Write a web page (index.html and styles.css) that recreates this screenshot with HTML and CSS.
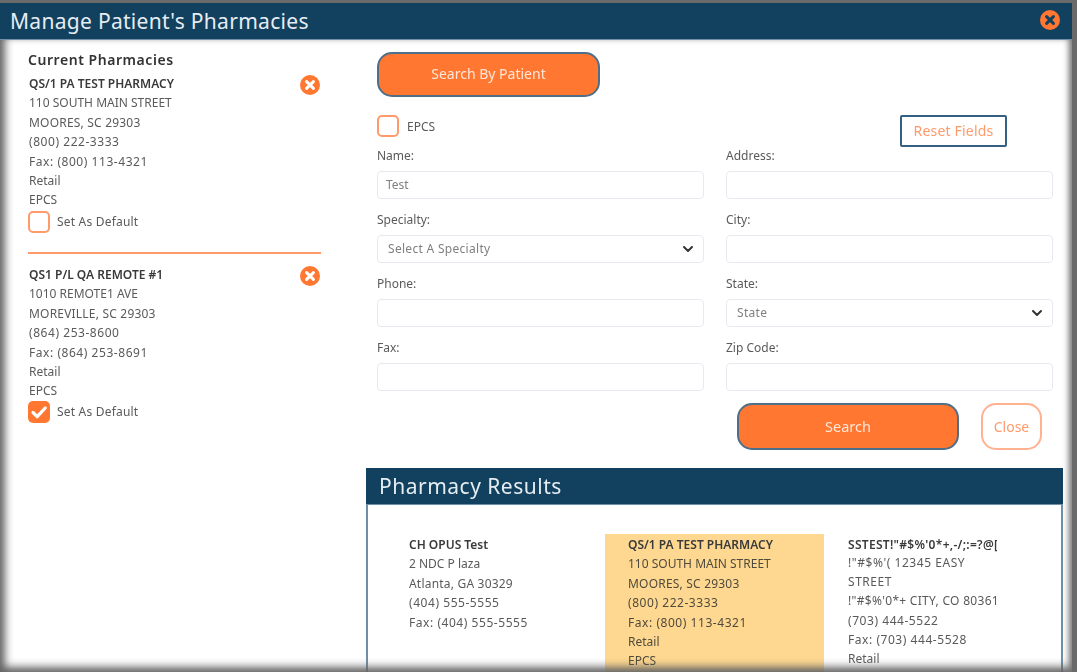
FILE: index.html
```html
<!DOCTYPE html>
<html lang="en">
<head>
<meta charset="utf-8">
<title>Manage Patient's Pharmacies</title>
<link rel="stylesheet" href="styles.css">
</head>
<body>
<div class="window">
  <header class="window-head">
    <h1>Manage Patient's Pharmacies</h1>
    <svg class="icon-x head-x" viewBox="0 0 20 20"><circle cx="10" cy="10" r="10" fill="#ff7731"/><path d="M6.6 6.6l6.8 6.8M13.4 6.6l-6.8 6.8" stroke="#12405f" stroke-width="3" stroke-linecap="round"/></svg>
  </header>
  <div class="window-body">
    <aside class="current">
      <h2>Current Pharmacies</h2>
      <section class="pharm first">
        <svg class="icon-x remove" viewBox="0 0 20 20"><circle cx="10" cy="10" r="10" fill="#ff7731"/><path d="M6.6 6.6l6.8 6.8M13.4 6.6l-6.8 6.8" stroke="#fff" stroke-width="3" stroke-linecap="round"/></svg>
        <div class="info">
          <b>QS/1 PA TEST PHARMACY</b>
          <span>110 SOUTH MAIN STREET</span>
          <span class="num-light">MOORES, SC 29303</span>
          <span class="num">(800) 222-3333</span>
          <span class="num">Fax: (800) 113-4321</span>
          <span>Retail</span>
          <span>EPCS</span>
        </div>
        <div class="check-row"><span class="check"></span><span class="check-label">Set As Default</span></div>
      </section>
      <section class="pharm">
        <svg class="icon-x remove" viewBox="0 0 20 20"><circle cx="10" cy="10" r="10" fill="#ff7731"/><path d="M6.6 6.6l6.8 6.8M13.4 6.6l-6.8 6.8" stroke="#fff" stroke-width="3" stroke-linecap="round"/></svg>
        <div class="info">
          <b>QS1 P/L QA REMOTE #1</b>
          <span>1010 REMOTE1 AVE</span>
          <span class="num-light">MOREVILLE, SC 29303</span>
          <span class="num">(864) 253-8600</span>
          <span class="num">Fax: (864) 253-8691</span>
          <span>Retail</span>
          <span>EPCS</span>
        </div>
        <div class="check-row"><span class="check on"><svg viewBox="0 0 22 22"><path d="M5 11.5l4.2 4.2L17.2 7" fill="none" stroke="#fff" stroke-width="3.2" stroke-linecap="round" stroke-linejoin="round"/></svg></span><span class="check-label">Set As Default</span></div>
      </section>
    </aside>
    <main class="search">
      <form class="form">
        <button type="button" class="btn-solid by-patient">Search By Patient</button>
        <div class="epcs-row">
          <div class="check-row epcs"><span class="check"></span><span>EPCS</span></div>
          <button type="button" class="btn-reset">Reset Fields</button>
        </div>
        <div class="fields">
          <label class="field"><span>Name:</span><input value="Test"></label>
          <label class="field"><span>Address:</span><input></label>
          <label class="field"><span>Specialty:</span>
            <div class="select-wrap"><select><option>Select A Specialty</option></select><svg viewBox="0 0 12 8"><path d="M2 2l4 4 4-4" fill="none" stroke="#333" stroke-width="2" stroke-linecap="round" stroke-linejoin="round"/></svg></div>
          </label>
          <label class="field"><span>City:</span><input></label>
          <label class="field"><span>Phone:</span><input></label>
          <label class="field"><span>State:</span>
            <div class="select-wrap"><select><option>State</option></select><svg viewBox="0 0 12 8"><path d="M2 2l4 4 4-4" fill="none" stroke="#333" stroke-width="2" stroke-linecap="round" stroke-linejoin="round"/></svg></div>
          </label>
          <label class="field"><span>Fax:</span><input></label>
          <label class="field"><span>Zip Code:</span><input></label>
        </div>
        <div class="actions">
          <button type="button" class="btn-solid do-search">Search</button>
          <button type="button" class="btn-close">Close</button>
        </div>
      </form>
      <section class="results">
        <h2>Pharmacy Results</h2>
        <div class="result-grid">
          <div class="info card">
            <b>CH OPUS Test</b>
            <span>2 NDC P laza</span>
            <span class="num-light">Atlanta, GA 30329</span>
            <span class="num">(404) 555-5555</span>
            <span class="num">Fax: (404) 555-5555</span>
          </div>
          <div class="info card picked">
            <b>QS/1 PA TEST PHARMACY</b>
            <span>110 SOUTH MAIN STREET</span>
            <span class="num-light">MOORES, SC 29303</span>
            <span class="num">(800) 222-3333</span>
            <span class="num">Fax: (800) 113-4321</span>
            <span>Retail</span>
            <span>EPCS</span>
          </div>
          <div class="info card third">
            <b class="clip">SSTEST!"#$%'0*+,-/;:=?@[</b>
            <span class="num wrapped">!"#$%'( 12345 EASY STREET</span>
            <span class="city">!"#$%'0*+ CITY, CO 80361</span>
            <span class="num">(703) 444-5522</span>
            <span class="num">Fax: (703) 444-5528</span>
            <span>Retail</span>
          </div>
        </div>
      </section>
    </main>
  </div>
</div>
</body>
</html>
```

FILE: styles.css
```css
* { box-sizing: border-box; }
html, body { margin: 0; height: 100%; overflow: hidden; }
body {
  background: #6a6a6a;
  font-family: "Noto Sans", "Liberation Sans", sans-serif;
  font-size: 12px;
  color: #5a5a5a;
}
.window {
  height: 672px;
  margin: 3px 5px 0 0;
  background: #fff;
  display: flex;
  flex-direction: column;
  filter: blur(0.45px);
}
.window-head {
  height: 37px;
  flex: none;
  background: #12405f;
  border-bottom: 1px solid #6f90a8;
  display: flex;
  align-items: center;
  justify-content: space-between;
  padding: 0 12px 0 10px;
}
.window-head h1 {
  margin: 0;
  font-size: 21px;
  font-weight: 400;
  letter-spacing: 0.3px;
  color: #e6edf2;
}
.icon-x { width: 20px; height: 20px; flex: none; }
.head-x { margin-bottom: 3px; }
.window-body {
  position: relative;
  flex: 1;
  display: flex;
  min-height: 0;
}
.window-body::after {
  content: "";
  position: absolute;
  left: 0;
  right: 0;
  top: 0;
  height: 632px;
  pointer-events: none;
  box-shadow: inset 9px 0 8px -4px #666, inset -7px 0 6px -4px #777, inset 0 -9px 8px -4px #666;
}
.current {
  width: 293px;
  flex: none;
  margin-left: 28px;
  padding-top: 10px;
}
.current h2 {
  margin: 0 0 4px;
  font-size: 14px;
  line-height: 20px;
  font-weight: 600;
  letter-spacing: 0.55px;
  color: #333;
}
.current .info { padding-left: 1px; }
.pharm { position: relative; }
.pharm.first {
  border-bottom: 2px solid #ff9a6b;
  height: 180px;
  margin-bottom: 11px;
}
.first .check-row { margin-top: 1px; }
.remove { position: absolute; right: 1px; top: 1px; }
.info { display: flex; flex-direction: column; line-height: 19.4px; }
.info b { font-weight: 600; color: #3a3a3a; }
.num { letter-spacing: 0.55px; }
.num-light { letter-spacing: 0.2px; }
.check-row { display: flex; align-items: center; gap: 7px; }
.check-row.epcs { gap: 8px; }
.check-label { letter-spacing: 0.2px; }
.check {
  width: 22px;
  height: 22px;
  flex: none;
  border: 2px solid #ff9a6b;
  border-radius: 5px;
  background: #fff;
}
.check.on { border: 0; background: #ff7731; }
.check.on svg { display: block; width: 22px; height: 22px; }
.search { flex: 1; margin-left: 45px; padding-top: 12px; min-width: 0; }
.form { padding: 0 19px 0 11px; }
.btn-solid {
  display: block;
  background: #ff7731;
  border: 2px solid #4f6f88;
  border-radius: 15px;
  color: #ffe6d8;
  font: inherit;
  font-size: 14px;
  padding: 0 0 2px;
}
.by-patient { width: 223px; height: 45px; }
.epcs-row {
  display: flex;
  justify-content: space-between;
  align-items: flex-start;
  margin-top: 18px;
  height: 33px;
  padding-right: 46px;
}
.btn-reset {
  width: 107px;
  height: 32px;
  background: #fff;
  border: 2px solid #336083;
  border-radius: 2px;
  color: #ff9a6b;
  font: inherit;
  font-size: 14px;
  letter-spacing: 0.2px;
  padding: 0 0 2px;
}
.fields {
  display: grid;
  grid-template-columns: 327px 327px;
  column-gap: 22px;
  row-gap: 13px;
}
.field { display: flex; flex-direction: column; min-width: 0; }
.field > span { height: 23px; line-height: 16px; color: #5a5a5a; }
.field input, .field select {
  width: 100%;
  height: 28px;
  border: 1px solid #e6eaee;
  border-radius: 4px;
  background: #fff;
  font: inherit;
  color: #808080;
  padding: 0 8px 2px;
  outline: 0;
}
.select-wrap { display: grid; align-items: center; }
.select-wrap > * { grid-area: 1 / 1; }
.field select { appearance: none; padding: 0 10px 2px; letter-spacing: 0.3px; }
.select-wrap svg { width: 12px; height: 8px; justify-self: end; margin-right: 10px; pointer-events: none; }
.actions {
  display: flex;
  gap: 22px;
  margin: 12px 0 18px 360px;
}
.do-search { width: 222px; height: 47px; font-size: 14.5px; }
.btn-close {
  width: 61px;
  height: 47px;
  background: #fff;
  border: 2px solid #ffb190;
  border-radius: 15px;
  color: #ff9a6b;
  font: inherit;
  font-size: 14px;
  padding: 0;
}
.results {
  width: 697px;
  border-left: 2px solid #6f90a8;
  border-right: 2px solid #6f90a8;
}
.results h2 {
  margin: 0 -2px;
  height: 37px;
  padding-left: 13px;
  background: #12405f;
  border-bottom: 1px solid #6f90a8;
  color: #e6edf2;
  font-size: 21px;
  line-height: 37px;
  font-weight: 400;
  letter-spacing: 0.5px;
}
.result-grid {
  display: grid;
  grid-template-columns: repeat(3, 219px);
  padding: 29px 0 0 18px;
}
.card { padding: 1px 24px 20px 23px; min-width: 0; }
.card.third { padding-left: 24px; padding-right: 46px; }
.third b { letter-spacing: 0.3px; }
.third .wrapped { line-height: 18.4px; }
.third .city { white-space: nowrap; letter-spacing: 0.3px; }
.picked { background: #fed890; color: #4f4a3d; }
.clip { white-space: nowrap; overflow: hidden; }
```
